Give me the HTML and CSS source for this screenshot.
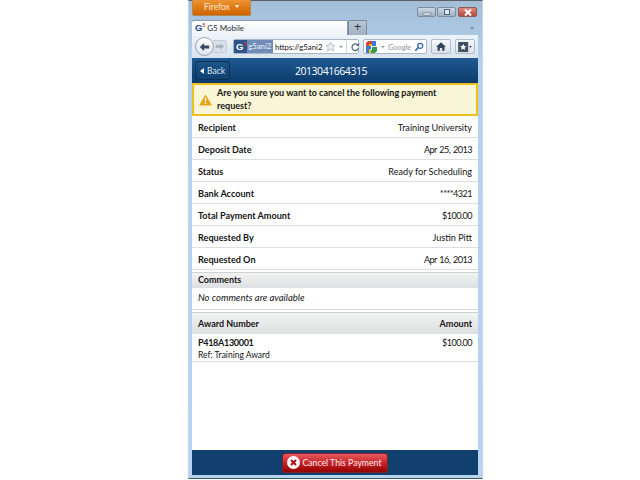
FILE: index.html
```html
<!DOCTYPE html>
<html lang="en">
<head>
<meta charset="utf-8">
<title>G5 Mobile</title>
<link rel="stylesheet" href="styles.css">
</head>
<body>
<div class="window">
  <div class="titlebar">
    <div class="ff-button">Firefox <span class="caret"></span></div>
    <div class="win-controls">
      <span class="wc"><svg width="14" height="8" viewBox="0 0 14 8"><rect x="3" y="5" width="8" height="2" fill="#fff" stroke="#56677a" stroke-width=".6"/></svg></span>
      <span class="wc"><svg width="14" height="8" viewBox="0 0 14 8"><rect x="4.5" y="1.5" width="5" height="5" fill="#dfe8f2" stroke="#56677a"/></svg></span>
      <span class="wc close"><svg width="14" height="9" viewBox="0 0 14 9"><path d="M4 1.5 10 7.5M10 1.5 4 7.5" stroke="#fff" stroke-width="2"/></svg></span>
    </div>
  </div>
  <div class="tabbar">
    <div class="tab"><span class="g5"><b>G</b><sup>5</sup></span><span>G5 Mobile</span></div>
    <div class="newtab">+</div>
    <span class="tabmenu"></span>
  </div>
  <div class="toolbar">
    <div class="nav">
      <span class="back-circle"><svg width="11" height="10" viewBox="0 0 14 12"><path d="M1 6 6.5 1V4H13V8H6.5V11Z" fill="#34495f"/></svg></span>
      <span class="forward"><svg width="10" height="9" viewBox="0 0 12 10"><path d="M11 5 6.5 1V3.3H1V6.7H6.5V9Z" fill="#aab4bf"/></svg></span>
    </div>
    <div class="urlbar">
      <span class="identity"><span class="g5 light"><b>G</b><sup>5</sup></span><span class="host">g5ani2</span></span>
      <span class="url">https://g5ani2</span>
      <svg class="star" width="11" height="11" viewBox="0 0 24 24"><path d="M12 2 15 9 22 9.6 16.8 14.4 18.4 22 12 18 5.6 22 7.2 14.4 2 9.6 9 9Z" fill="#eef1f4" stroke="#b4bbc3" stroke-width="2"/></svg>
      <span class="mini-caret"></span>
      <span class="reload"><svg width="10" height="10" viewBox="0 0 12 12"><path d="M10 4.5A4 4 0 1 0 10.2 7.5" fill="none" stroke="#566a7e" stroke-width="1.6"/><path d="M7.5 4.8H11V1.2Z" fill="#566a7e"/></svg></span>
    </div>
    <div class="searchbar">
      <svg class="gicon" width="12" height="12" viewBox="0 0 12 12"><path d="M2 0H6V3H3V5H0V2Z" fill="#d8442f"/><path d="M6 0H10V5H6Z" fill="#3a78e0"/><path d="M0 5H5V8H3V12H0Z" fill="#3a78e0"/><path d="M6 6H11V10L9 12H5V9H6Z" fill="#2e9e4f"/><path d="M3 8H5V12H3Z" fill="#f5c518"/><path d="M3 3H6V5H3Z" fill="#f5c518"/></svg>
      <span class="mini-caret"></span>
      <span class="google">Google</span>
      <svg class="lens" width="10" height="10" viewBox="0 0 12 12"><circle cx="7.5" cy="4.5" r="3" fill="none" stroke="#2f66b5" stroke-width="1.5"/><path d="M5.2 6.8 1.5 10.5" stroke="#2f66b5" stroke-width="2"/></svg>
    </div>
    <span class="tbtn"><svg width="10" height="9" viewBox="0 0 13 11"><path d="M6.5 0 13 6H11V11H8V7.5H5V11H2V6H0Z" fill="#33465a"/></svg></span>
    <span class="tbtn"><svg width="14" height="10" viewBox="0 0 15 11"><rect width="11" height="11" fill="#3d4f62"/><path d="M5.5 2 6.5 4.5 9 4.7 7.1 6.3 7.7 8.8 5.5 7.4 3.3 8.8 3.9 6.3 2 4.7 4.5 4.5Z" fill="#fff"/><path d="M12 4.5h3L13.5 6.5Z" fill="#3d4f62"/></svg></span>
  </div>
  <main class="page">
    <header class="app-header">
      <a class="back-btn"><span class="back-arrow"></span>Back</a>
      <h1>2013041664315</h1>
    </header>
    <div class="alert">
      <svg class="warn" width="13" height="12" viewBox="0 0 14 12"><path d="M7 0 14 12H0Z" fill="#e8a417"/><path d="M6.2 3.5H7.8L7.5 8H6.5Z" fill="#fff"/><rect x="6.2" y="8.8" width="1.6" height="1.6" fill="#fff"/></svg>
      <p>Are you sure you want to cancel the following payment request?</p>
    </div>
    <div class="details">
      <div class="row"><strong>Recipient</strong><span>Training University</span></div>
      <div class="row"><strong>Deposit Date</strong><span class="num">Apr 25, 2013</span></div>
      <div class="row"><strong>Status</strong><span>Ready for Scheduling</span></div>
      <div class="row"><strong>Bank Account</strong><span class="num">****4321</span></div>
      <div class="row"><strong>Total Payment Amount</strong><span class="num">$100.00</span></div>
      <div class="row"><strong>Requested By</strong><span>Justin Pitt</span></div>
      <div class="row"><strong>Requested On</strong><span class="num">Apr 16, 2013</span></div>
    </div>
    <div class="section-head comments-head"><strong>Comments</strong></div>
    <div class="comment"><em>No comments are available</em></div>
    <div class="section-head award-head"><strong>Award Number</strong><strong>Amount</strong></div>
    <div class="award">
      <div><div class="award-no">P418A130001</div><div class="award-ref">Ref: Training Award</div></div>
      <span class="num">$100.00</span>
    </div>
    <div class="spacer"></div>
    <footer class="app-footer">
      <a class="cancel-btn"><svg width="13" height="13" viewBox="0 0 13 13"><circle cx="6.5" cy="6.5" r="6.5" fill="#fff"/><path d="M4 4 9 9M9 4 4 9" stroke="#b3141a" stroke-width="2.2"/></svg><span>Cancel This Payment</span></a>
    </footer>
  </main>
</div>
</body>
</html>
```
FILE: styles.css
```css
* { box-sizing: border-box; }
html, body { margin: 0; height: 100%; background: #fff; overflow: hidden; }
body { font-family: Lato, "Open Sans", sans-serif; font-size: 9.1px; color: #141414; }

.window {
  width: 295px;
  height: 479px;
  margin-left: 188px;
  padding: 0 4px 3px 3px;
  display: flex;
  flex-direction: column;
  background: linear-gradient(#a3bdd6, #b4d1ee 60px, #b6d4f1);
  border: 1px solid #c3d3e2;
  border-top-color: #5b5f66;
  border-bottom-color: #3c5a56;
}

.titlebar { height: 19px; display: flex; justify-content: space-between; align-items: flex-start; flex: none; }
.ff-button {
  width: 59px; height: 16px; margin-top: -1px;
  background: linear-gradient(#ed9436, #e27d14 45%, #cc6405);
  color: #f8e8d8; font-size: 8.5px; text-align: center; line-height: 14px;
  border: 1px solid #b8894f; border-top: 0;
  border-radius: 0 0 2px 2px;
}
.caret { display: inline-block; margin: 0 0 2px 3px; border: 2.5px solid transparent; border-top: 3px solid #fff; border-bottom: 0; }
.win-controls { display: flex; gap: 1px; margin-top: 6px; margin-right: 1px; }
.wc { width: 19px; height: 10px; display: flex; align-items: center; justify-content: center; border: 1px solid #7e8c9b; border-radius: 2px; background: linear-gradient(#cbd9e7, #9fb1c3); }
.close { margin-left: 1px; background: linear-gradient(#dc8a7e, #b84a3a); border-color: #8c5a55; }

.tabbar { height: 15px; display: flex; flex: none; position: relative; }
.tab {
  width: 156px; height: 15px; background: linear-gradient(#fff, #eef3f8);
  border: 1px solid #8a9aac; border-bottom: 0; border-left: 0; border-radius: 2px 2px 0 0;
  display: flex; align-items: center; gap: 2px; padding-left: 3px;
  font-size: 8px; color: #2c3238;
}
.g5 { color: #1d4a80; font-size: 9.5px; display: inline-flex; line-height: 1; font-family: "Liberation Sans", sans-serif; }
.g5 sup { color: #d33; font-size: 5px; font-weight: 700; line-height: 1; }
.g5.light { color: #fff; }
.newtab {
  width: 19px; height: 15px;
  background: linear-gradient(#b8c6d4, #a2b2c2);
  border: 1px solid #7c8b9b; border-bottom: 0; border-radius: 2px 2px 0 0;
  text-align: center; font: 13px/12px "Liberation Sans", sans-serif; color: #2c3a48;
}
.tabmenu { position: absolute; right: 4px; top: 7px; border: 2px solid transparent; border-top: 3px solid #7d8b99; border-bottom: 0; }

.toolbar {
  height: 23px; flex: none; display: flex; align-items: center;
  background: linear-gradient(#edf3f9, #d8e3ef);
  padding-left: 3px;
}
.nav { display: flex; align-items: center; width: 36px; flex: none; }
.back-circle {
  width: 19px; height: 19px; border-radius: 50%; flex: none; position: relative;
  background: linear-gradient(#fdfdfd, #dfe5ec);
  border: 1px solid #96a4b3; display: flex; align-items: center; justify-content: center;
}
.forward { width: 14px; height: 13px; margin-left: -1px; flex: none; display: flex; align-items: center; justify-content: center; background: #d8e1ea; border: 1px solid #c2cdd8; border-left: 0; border-radius: 0 3px 3px 0; }
.urlbar {
  width: 126px; height: 15px; background: #fff; border: 1px solid #a8b5c3; border-radius: 2px;
  display: flex; align-items: center; flex: none; margin-left: 2px; font-size: 7.8px; color: #141414;
}
.identity { background: #2f5488; color: #eef3f9; height: 13px; display: flex; align-items: center; gap: 1px; width: 39px; flex: none; padding-left: 2px; font-size: 7.8px; overflow: hidden; }
.host { background: #6f8cb8; flex: 1; height: 13px; line-height: 13px; padding-left: 1px; }
.url { margin-left: 2px; width: 48px; flex: none; white-space: nowrap; }
.star { margin-left: 2px; flex: none; }
.mini-caret { display: inline-block; margin-left: 3px; border: 2px solid transparent; border-top: 2.5px solid #8a96a3; border-bottom: 0; flex: none; }
.reload { margin-left: 3px; padding-left: 3px; height: 13px; display: flex; align-items: center; border-left: 1px solid #d2d9e0; }
.searchbar {
  width: 64px; height: 15px; margin-left: 4px; flex: none; background: #fff; border: 1px solid #a8b5c3; border-radius: 2px;
  display: flex; align-items: center; padding-left: 2px;
}
.google { font-style: italic; color: #8f98a2; font-size: 8px; margin-left: 3px; flex: 1; }
.lens { margin-right: 2px; flex: none; }
.tbtn {
  width: 20px; height: 15px; margin-left: 4px; flex: none;
  border: 1px solid #b0bcc9; border-radius: 2px; background: linear-gradient(#f6f9fb, #d9e2eb);
  display: flex; align-items: center; justify-content: center;
}

.page { flex: 1; min-height: 0; display: flex; flex-direction: column; background: #fff; }
.app-header {
  height: 25px; flex: none; position: relative; display: flex; align-items: center; justify-content: center; padding-right: 8px;
  background: linear-gradient(#1f5a93, #0c3b6b);
}
.app-header h1 { margin: 0; font-size: 10.5px; font-weight: 400; color: #fff; letter-spacing: -.45px; font-family: "Open Sans", sans-serif; }
.back-btn {
  position: absolute; left: 3px; top: 3px; width: 35px; height: 19px;
  border: 1px solid #0a3056; border-radius: 3px; background: linear-gradient(#1c5487, #0f4070);
  color: #dfe8f2; font-size: 8.5px; display: flex; align-items: center; justify-content: center; gap: 3px;
}
.back-arrow { border: 3.5px solid transparent; border-right: 4px solid #fff; border-left: 0; }
.alert {
  height: 33px; flex: none; background: #f8f6d6; border: 2px solid #edc01c; display: flex; align-items: center; gap: 5px; padding: 0 5px;
}
.alert p { margin: 0; font-size: 9px; font-weight: 700; line-height: 12.5px; }
.warn { flex: none; }
.row {
  height: 22px; display: flex; justify-content: space-between; align-items: center; padding: 1px 6px 0;
  border-bottom: 1px solid #dcdfe1;
}
.row strong, .section-head strong { font-weight: 700; }
.num { letter-spacing: -.55px; word-spacing: 1px; }
.section-head {
  display: flex; justify-content: space-between; align-items: center; padding: 0 6px 1px; flex: none;
  background: linear-gradient(#f3f3f3, #dedfe0); border-top: 1px solid #cfd2d4; font-size: 9px;
}
.comments-head { height: 16px; margin-top: 2px; padding-bottom: 2px; }
.comment { height: 22px; flex: none; padding: 0 6px 3px; display: flex; align-items: center; border-bottom: 1px solid #d5d8da; font-size: 9.5px; }
.award-head { height: 22px; margin-top: 2px; }
.award { height: 28px; flex: none; padding: 3px 6px 0; display: flex; justify-content: space-between; border-bottom: 1px solid #dcdfe1; line-height: 12px; }
.award-no { font-size: 9px; font-weight: 700; letter-spacing: -.3px; }
.award-ref { font-size: 8.5px; }
.spacer { flex: 1; }
.app-footer { height: 25px; flex: none; background: #11406e; display: flex; justify-content: center; align-items: center; padding-right: 1px; }
.cancel-btn {
  width: 106px; height: 20px; border-radius: 3px; border: 1px solid #7d2229;
  background: linear-gradient(#e85a5e, #c62428 50%, #930000);
  color: #fbeaea; font-size: 8.7px; white-space: nowrap; display: flex; align-items: center; justify-content: center; gap: 2px;
}
```
